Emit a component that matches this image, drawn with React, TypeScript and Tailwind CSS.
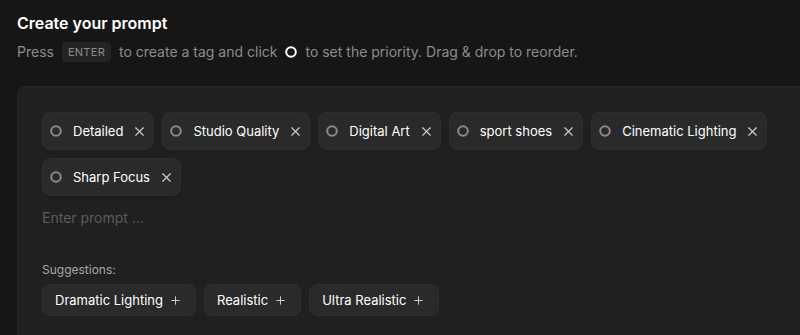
import { X, Plus } from "lucide-react";

const tags = [
  "Detailed",
  "Studio Quality",
  "Digital Art",
  "sport shoes",
  "Cinematic Lighting",
  "Sharp Focus",
];

const suggestions = ["Dramatic Lighting", "Realistic", "Ultra Realistic"];

function Ring({ className }: { className: string }) {
  return (
    <svg width="12" height="12" viewBox="0 0 12 12" className={className}>
      <circle cx="6" cy="6" r="4.8" fill="none" stroke="currentColor" strokeWidth="2" />
    </svg>
  );
}

export default function App() {
  return (
    <div className="h-[335px] w-[800px] overflow-hidden bg-[#161616] px-[17px] pt-[11px] font-['Inter',sans-serif]">
      <h1 className="text-base font-semibold leading-6 text-white">
        Create your prompt
      </h1>

      <p className="mt-[7px] flex items-center text-sm leading-5 text-[#8c8c8c]">
        Press
        <span className="mx-2 rounded bg-[#242424] px-1.5 py-0.5 text-[11px] leading-4 tracking-wide text-[#8c8c8c]">
          ENTER
        </span>
        to create a tag and click
        <Ring className="mx-2 text-white" />
        to set the priority. Drag &amp; drop to reorder.
      </p>

      <div className="mt-[24px] w-[800px] rounded-lg border border-[#252525] bg-[#202020] px-6 pt-[25px] pb-6">
        <div className="flex flex-wrap gap-2">
          {tags.map((tag) => (
            <div
              key={tag}
              className="flex items-center rounded-lg border border-[#2f2f2f] bg-[#2a2a2a] py-2 pl-[7px] pr-[6px] text-[13px] leading-5 text-white shadow-sm"
            >
              <Ring className="text-[#8a8a8a]" />
              <span className="ml-[11px]">{tag}</span>
              <X size={15} strokeWidth={1.8} className="ml-[9px] text-[#d0d0d0]" />
            </div>
          ))}
        </div>

        <div className="mt-[12px] text-sm leading-5 text-[#5c5c5c]">Enter prompt ...</div>

        <div className="mt-[34px] text-xs leading-4 text-[#a6a6a6]">Suggestions:</div>

        <div className="mt-[6px] flex gap-2">
          {suggestions.map((s) => (
            <div
              key={s}
              className="flex items-center rounded-lg border border-[#2f2f2f] bg-[#2a2a2a] py-[5px] pl-3 pr-[13px] text-[13px] leading-5 text-white"
            >
              {s}
              <Plus size={13} strokeWidth={1.8} className="ml-[6px] text-[#d0d0d0]" />
            </div>
          ))}
        </div>
      </div>
    </div>
  );
}
